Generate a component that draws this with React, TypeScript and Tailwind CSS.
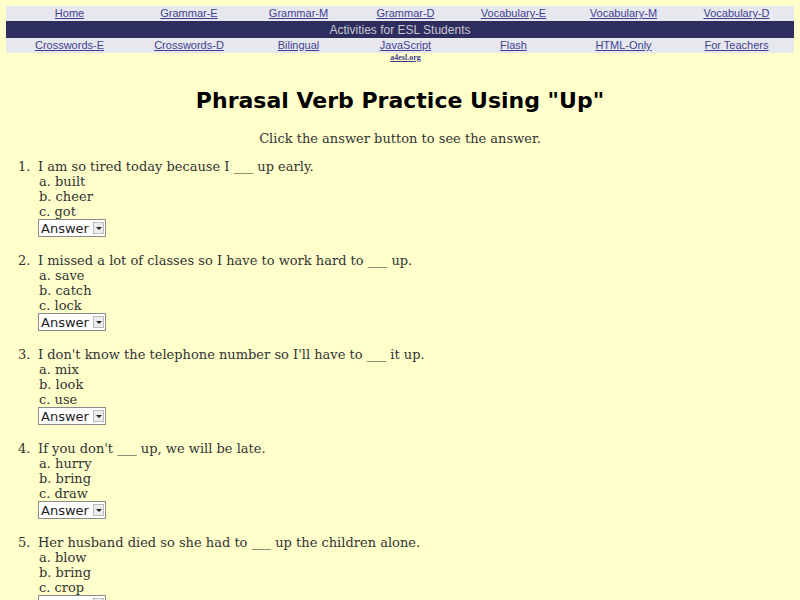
const topLinks = ['Home', 'Grammar-E', 'Grammar-M', 'Grammar-D', 'Vocabulary-E', 'Vocabulary-M', 'Vocabulary-D'];
const bottomLinks = ['Crosswords-E', 'Crosswords-D', 'Bilingual', 'JavaScript', 'Flash', 'HTML-Only', 'For Teachers'];

const questions = [
  { q: 'I am so tired today because I ___ up early.', opts: ['built', 'cheer', 'got'] },
  { q: 'I missed a lot of classes so I have to work hard to ___ up.', opts: ['save', 'catch', 'lock'] },
  { q: "I don't know the telephone number so I'll have to ___ it up.", opts: ['mix', 'look', 'use'] },
  { q: "If you don't ___ up, we will be late.", opts: ['hurry', 'bring', 'draw'] },
  { q: 'Her husband died so she had to ___ up the children alone.', opts: ['blow', 'bring', 'crop'] },
];

const cols = 'grid grid-cols-[127px_112px_107px_107px_109px_111px_115px]';

function NavRow({ links }: { links: string[] }) {
  return (
    <div className={`${cols} h-[15px] items-center bg-[#e7e7ee] font-['Liberation_Sans',sans-serif]`}>
      {links.map((l) => (
        <a key={l} href="#" className="text-center text-[11px] leading-none text-[#3f3f8f] underline">
          {l}
        </a>
      ))}
    </div>
  );
}

/** 老式下拉框：文字 + 右侧小箭头按钮 */
function AnswerSelect() {
  return (
    <div className="flex h-[18px] w-[68px] items-center border border-[#8a8a8a] bg-white pl-[2px] pr-[1px] font-['DejaVu_Sans',sans-serif] text-[13px] text-[#222]">
      <span className="flex-1 leading-none">Answer</span>
      <span className="flex h-[12px] w-[11px] items-center justify-center border border-[#bbb] bg-[#ececec]">
        <span className="border-x-[3px] border-t-[3px] border-x-transparent border-t-[#222]" />
      </span>
    </div>
  );
}

export default function App() {
  return (
    <div className="h-[600px] overflow-hidden bg-[#ffffcc] font-['DejaVu_Serif',serif] text-[#333]">
      <div className="px-[6px] pt-[6px]">
        <NavRow links={topLinks} />
        <div className="flex h-[17px] items-center justify-center bg-[#2d2d5e] font-['Liberation_Sans',sans-serif] text-[12px] text-[#c8c8d4]">
          Activities for ESL Students
        </div>
        <NavRow links={bottomLinks} />
        <div className={cols}>
          <span className="col-start-4 text-center font-['Liberation_Serif',serif] text-[8px] font-bold leading-[10px] text-[#3f3f8f] underline">
            a4esl.org
          </span>
        </div>
      </div>

      <h1 className="mt-[21px] text-center font-['Comic_Sans_MS','DejaVu_Sans',sans-serif] text-[22px] font-bold text-black">
        Phrasal Verb Practice Using "Up"
      </h1>
      <p className="mt-[14px] text-center text-[13px] leading-[15px]">Click the answer button to see the answer.</p>

      <ol className="mt-[13px] pl-[18px] text-[13px] leading-[15px]">
        {questions.map((item, i) => (
          <li key={i} className="mb-[16px] flex">
            <span className="w-[20px] shrink-0">{i + 1}.</span>
            <div>
              <div>{item.q}</div>
              {item.opts.map((o, j) => (
                <div key={o} className="pl-[1px]">
                  {String.fromCharCode(97 + j)}. {o}
                </div>
              ))}
              <AnswerSelect />
            </div>
          </li>
        ))}
      </ol>
    </div>
  );
}
